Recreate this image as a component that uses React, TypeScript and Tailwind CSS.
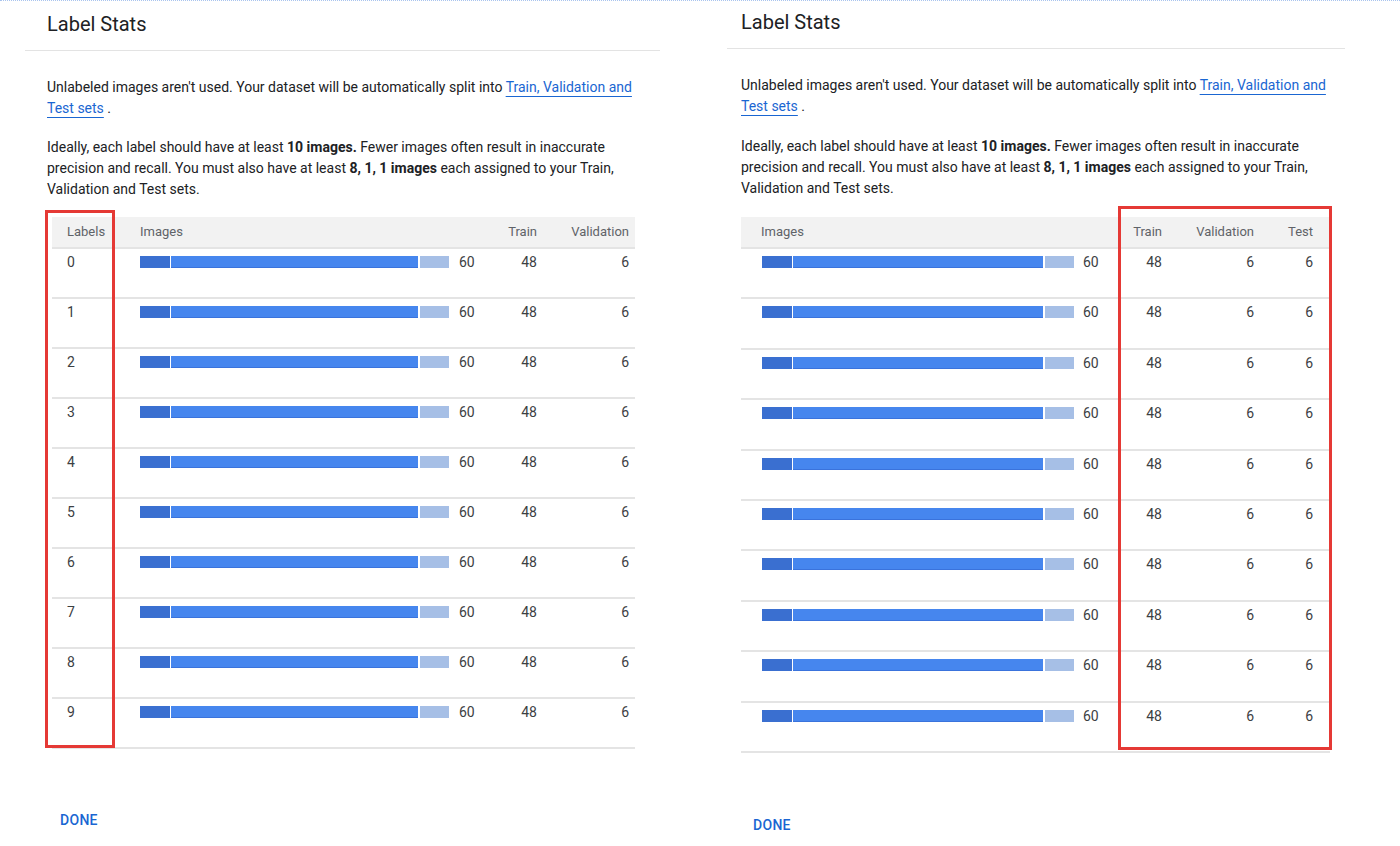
import React from "react";

const labels = ["0", "1", "2", "3", "4", "5", "6", "7", "8", "9"];

function Bar({ wide }: { wide: boolean }) {
  return (
    <div className="flex items-center h-[12px]">
      <div className="w-[30px] h-full bg-[#3a6fd0]" />
      <div className={(wide ? "w-[250px]" : "w-[247px]") + " ml-[1px] h-full bg-[#4686ee] border-b border-[#3a73dc]"} />
      <div className="w-[29px] ml-[2px] h-full bg-[#a6bfe6]" />
    </div>
  );
}

function Intro({ w }: { w: string }) {
  return (
    <p className={"text-[14px] leading-[21px] text-[#202124] " + w}>
      Unlabeled images aren't used. Your dataset will be automatically split into{" "}
      <span className="text-[#1a66d2] underline decoration-[#1a66d2] underline-offset-[4px]">
        Train, Validation and
        <br />
        Test sets
      </span>{" "}
      .
    </p>
  );
}

function Ideal({ w, mt }: { w: string; mt: string }) {
  return (
    <p className={"text-[14px] leading-[21px] text-[#202124] " + w + " " + mt}>
      Ideally, each label should have at least <b className="font-bold">10 images.</b> Fewer images often result in inaccurate
      <br />
      precision and recall. You must also have at least <b className="font-bold">8, 1, 1 images</b> each assigned to your Train,
      <br />
      Validation and Test sets.
    </p>
  );
}

function Done({ mt, pl }: { mt: string; pl: string }) {
  return (
    <div className={mt + " " + pl}>
      <span className="text-[14px] leading-[20px] font-medium tracking-[0.3px] text-[#1a66d2]">DONE</span>
    </div>
  );
}

function LeftPanel() {
  return (
    <div className="ml-[25px] w-[635px] shrink-0">
      <h1 className="pl-[22px] pt-[9px] pb-[12px] text-[20px] leading-[28px] font-normal text-[#202124] border-b border-[#e3e3e3]">
        Label Stats
      </h1>
      <div className="pl-[22px]">
        <div className="mt-[25.5px]">
          <Intro w="w-[600px]" />
        </div>
        <Ideal w="w-[600px]" mt="mt-[18px]" />
        <div className="relative ml-[5px] mt-[17.5px] w-[583px]">
          <div className="flex h-[30px] items-center bg-[#f2f2f2] text-[13px] text-[#5f6368]">
            <div className="w-[60px] pl-[15px]">Labels</div>
            <div className="w-[375px] pl-[28px]">Images</div>
            <div className="w-[50px] text-right">Train</div>
            <div className="w-[92px] text-right">Validation</div>
          </div>
          {labels.map((l) => (
            <div key={l} className="flex h-[50px] border-t-2 border-[#e4e4e4] pt-[3px] text-[14px] leading-[20px] text-[#3c4043]">
              <div className="w-[60px] pl-[15px]">{l}</div>
              <div className="w-[375px] pl-[28px] flex items-center h-[20px]">
                <Bar wide={false} />
                <span className="ml-[10px]">60</span>
              </div>
              <div className="w-[50px] text-right">48</div>
              <div className="w-[92px] text-right">6</div>
            </div>
          ))}
          <div className="border-t-2 border-[#e4e4e4]" />
          <div className="absolute left-[-7px] top-[-7px] w-[70px] h-[538px] border-[3px] border-[#e53935]" />
        </div>
        <Done mt="mt-[59px]" pl="pl-[13px]" />
      </div>
    </div>
  );
}

function RightPanel() {
  return (
    <div className="ml-[67px] w-[618px] shrink-0">
      <h1 className="pl-[14px] pt-[7px] pb-[12px] text-[20px] leading-[28px] font-normal text-[#202124] border-b border-[#e3e3e3]">
        Label Stats
      </h1>
      <div className="pl-[14px]">
        <div className="mt-[25.5px]">
          <Intro w="w-[600px]" />
        </div>
        <Ideal w="w-[600px]" mt="mt-[19px]" />
        <div className="relative mt-[18.5px] w-[589px]">
          <div className="flex h-[30px] items-center bg-[#f2f2f2] text-[13px] text-[#5f6368]">
            <div className="w-[379px] pl-[20px]">Images</div>
            <div className="w-[42px] text-right">Train</div>
            <div className="w-[92px] text-right">Validation</div>
            <div className="w-[76px] text-right pr-[17px]">Test</div>
          </div>
          {labels.map((l) => (
            <div key={l} className="flex h-[50.4px] border-t-2 border-[#e4e4e4] pt-[3px] text-[14px] leading-[20px] text-[#3c4043]">
              <div className="w-[379px] pl-[21px] flex items-center h-[20px]">
                <Bar wide={true} />
                <span className="ml-[9px]">60</span>
              </div>
              <div className="w-[42px] text-right">48</div>
              <div className="w-[92px] text-right">6</div>
              <div className="w-[76px] text-right pr-[17px]">6</div>
            </div>
          ))}
          <div className="border-t-2 border-[#e4e4e4]" />
          <div className="absolute left-[377px] top-[-11px] w-[214px] h-[544px] border-[3px] border-[#e53935]" />
        </div>
        <Done mt="mt-[60px]" pl="pl-[12px]" />
      </div>
    </div>
  );
}

export default function App() {
  return (
    <div
      className="w-[1400px] h-[846px] bg-white overflow-hidden border-t border-dotted border-[#a9c4ee] flex"
      style={{ fontFamily: "Roboto, 'Liberation Sans', Arial, sans-serif" }}
    >
      <LeftPanel />
      <RightPanel />
    </div>
  );
}
